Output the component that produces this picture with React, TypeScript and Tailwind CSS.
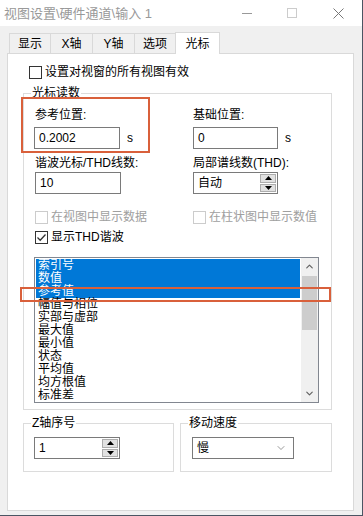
import { ChevronDown, ChevronUp } from 'lucide-react';

const font = { fontFamily: '"Liberation Sans", "Noto Sans CJK SC", sans-serif' };

const items = ['索引号', '数值', '参考值', '幅值与相位', '实部与虚部', '最大值', '最小值', '状态', '平均值', '均方根值', '标准差'];

function Box({ checked, disabled }: { checked?: boolean; disabled?: boolean }) {
  return (
    <span
      className={`flex h-[13px] w-[13px] shrink-0 items-center justify-center border bg-white ${
        disabled ? 'border-[#cccccc]' : 'border-[#333333]'
      }`}
    >
      {checked && (
        <svg width="11" height="11" viewBox="0 0 11 11">
          <path d="M1.5 5.5 L4.2 8.2 L9.5 2.5" fill="none" stroke="#333" strokeWidth="1.3" />
        </svg>
      )}
    </span>
  );
}

function Spin({ value, w }: { value: string; w: string }) {
  return (
    <div className={`flex h-[22px] ${w} border border-[#7a7a7a] bg-white`}>
      <div className="flex flex-1 items-center pl-[4px] text-[12px] leading-none text-black">{value}</div>
      <div className="flex w-[17px] flex-col gap-[1px] bg-white py-[1px] pr-[1px]">
        <div className="flex flex-1 items-center justify-center border border-[#adadad] bg-[#e1e1e1]">
          <svg width="7" height="4" viewBox="0 0 7 4"><path d="M0 4 L3.5 0 L7 4Z" fill="#000" /></svg>
        </div>
        <div className="flex flex-1 items-center justify-center border border-[#adadad] bg-[#e1e1e1]">
          <svg width="7" height="4" viewBox="0 0 7 4"><path d="M0 0 L3.5 4 L7 0Z" fill="#000" /></svg>
        </div>
      </div>
    </div>
  );
}

function Group({ title, className, children }: { title: string; className?: string; children: React.ReactNode }) {
  return (
    <div className={`relative border border-[#dcdcdc] ${className ?? ''}`}>
      <span className="absolute -top-[8px] left-[7px] bg-white px-[1px] text-[12px] leading-[14px] text-black">{title}</span>
      {children}
    </div>
  );
}

export default function App() {
  const tabs = [
    { label: '显示', w: 'w-[41px]' },
    { label: 'X轴', w: 'w-[42px]' },
    { label: 'Y轴', w: 'w-[42px]' },
    { label: '选项', w: 'w-[41px]' },
  ];

  return (
    <div className="relative h-[516px] w-[363px] overflow-hidden bg-[#4b5563]" style={font}>
      <div className="flex h-[515px] w-[362px] flex-col bg-[#f0f0f0]">
        {/* title bar */}
        <div className="flex h-[26px] items-center bg-white">
          <span className="pl-[4px] text-[13px] leading-none text-[#999999]">视图设置\硬件通道\输入 1</span>
          <div className="ml-auto flex items-center">
            <span className="mr-[35px] h-[1px] w-[10px] bg-[#999999]" />
            <span className="mr-[36px] h-[10px] w-[10px] border border-[#cccccc]" />
            <svg width="11" height="11" viewBox="0 0 11 11" className="mr-[18px]">
              <path d="M0.5 0.5 L10.5 10.5 M10.5 0.5 L0.5 10.5" stroke="#777" strokeWidth="1" />
            </svg>
          </div>
        </div>

        {/* tabs */}
        <div className="flex items-end pl-[9px] pt-[6px]">
          {tabs.map((t) => (
            <div
              key={t.label}
              className={`flex h-[20px] ${t.w} items-center justify-center border border-b-0 border-r-0 border-[#d9d9d9] text-[12px] leading-none text-black`}
            >
              {t.label}
            </div>
          ))}
          <div className="relative z-10 -mb-[1px] flex h-[22px] w-[45px] items-center justify-center border border-b-0 border-[#d9d9d9] bg-white text-[12px] leading-none text-black">
            光标
          </div>
        </div>

        {/* panel */}
        <div className="ml-[7px] flex h-[458px] w-[347px] flex-col border border-[#d9d9d9] bg-white pl-[15px] pr-[21px]">
          <div className="mt-[11px] flex h-[14px] items-center gap-[3px] pl-[6px] text-[12px] leading-none text-black">
            <Box />
            <span>设置对视窗的所有视图有效</span>
          </div>

          <Group title="光标读数" className="mt-[14px] pb-[6px] pl-[10px] pr-[11px] pt-[14px]">
            <div className="grid grid-cols-[159px_1fr] text-[12px] leading-[14px] text-black">
              <div className="pl-[1px]">参考位置:</div>
              <div>基础位置:</div>
              <div className="mt-[5px] flex items-center">
                <div className="flex h-[22px] w-[86px] items-center border border-[#7a7a7a] pl-[4px] leading-none">0.2002</div>
                <span className="ml-[7px]">s</span>
              </div>
              <div className="mt-[5px] flex items-center">
                <div className="flex h-[22px] w-[85px] items-center border border-[#7a7a7a] pl-[4px] leading-none">0</div>
                <span className="ml-[7px]">s</span>
              </div>
              <div className="mt-[7px] pl-[1px]">谐波光标/THD线数:</div>
              <div className="mt-[7px]">局部谱线数(THD):</div>
              <div className="mt-[2px] pl-[1px]">
                <div className="flex h-[22px] w-[86px] items-center border border-[#7a7a7a] pl-[4px] leading-none">10</div>
              </div>
              <div className="mt-[2px]">
                <Spin value="自动" w="w-[85px]" />
              </div>
              <div className="mt-[16px] flex items-center gap-[3px] pl-[1px] text-[#a0a0a0]">
                <Box disabled />
                <span>在视图中显示数据</span>
              </div>
              <div className="mt-[16px] flex items-center gap-[3px] text-[#a0a0a0]">
                <Box disabled />
                <span>在柱状图中显示数值</span>
              </div>
              <div className="col-span-2 mt-[6px] flex items-center gap-[3px] pl-[1px]">
                <Box checked />
                <span>显示THD谐波</span>
              </div>
            </div>

            {/* listbox */}
            <div className="mt-[13px] flex h-[146px] w-[285px] border border-[#828790] bg-white">
              <div className="flex-1 overflow-hidden p-[1px]">
                {items.map((it, i) => (
                  <div
                    key={it}
                    className={`h-[13px] pl-[2px] text-[12px] leading-[13px] ${
                      i < 3 ? 'bg-[#0078d7] text-white' : 'text-black'
                    }`}
                  >
                    {it}
                  </div>
                ))}
              </div>
              <div className="flex w-[17px] flex-col items-center bg-[#f0f0f0]">
                <div className="flex h-[17px] w-full items-center justify-center">
                  <ChevronUp size={11} strokeWidth={2.5} color="#606060" />
                </div>
                <div className="mt-[1px] h-[54px] w-[15px] bg-[#cdcdcd]" />
                <div className="mt-auto flex h-[17px] w-full items-center justify-center">
                  <ChevronDown size={11} strokeWidth={2.5} color="#606060" />
                </div>
              </div>
            </div>
          </Group>

          <div className="mt-[13px] flex gap-[6px]">
            <Group title="Z轴序号" className="h-[49px] w-[152px] pl-[10px] pt-[13px]">
              <Spin value="1" w="w-[86px]" />
            </Group>
            <Group title="移动速度" className="h-[49px] w-[153px] pl-[11px] pt-[13px]">
              <div className="flex h-[22px] w-[102px] items-center border border-[#7a7a7a] pl-[4px] pr-[6px] text-[12px] leading-none text-black">
                <span>慢</span>
                <ChevronDown size={12} strokeWidth={1.2} color="#555" className="ml-auto" />
              </div>
            </Group>
          </div>
        </div>
      </div>

      {/* annotation boxes */}
      <div className="absolute left-[21px] top-[97px] h-[56px] w-[129px] border-2 border-[#d9603b]" />
      <div className="absolute left-[20px] top-[287px] h-[15px] w-[311px] border-2 border-[#d9603b]" />
    </div>
  );
}
